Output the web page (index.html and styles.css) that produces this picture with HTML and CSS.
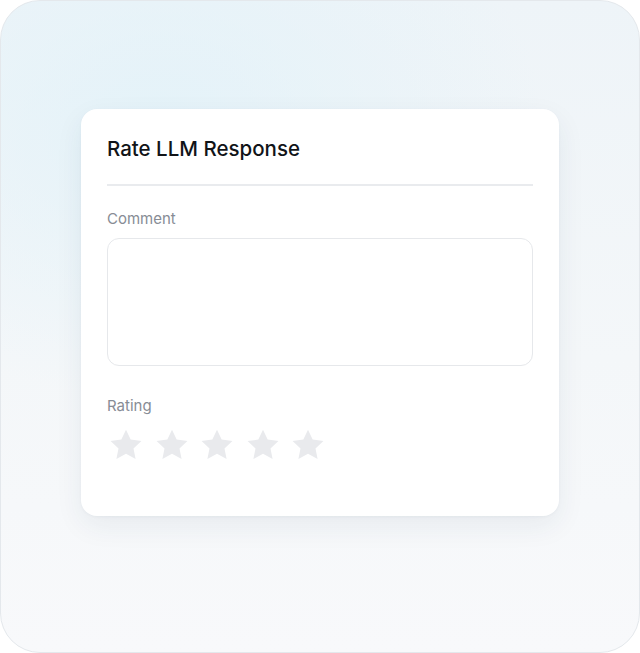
FILE: index.html
```html
<!DOCTYPE html>
<html>
<head>
<meta charset="utf-8">
<link rel="stylesheet" href="styles.css">
</head>
<body>
<div class="frame">
  <div class="card">
    <h1 class="title">Rate LLM Response</h1>
    <div class="divider"></div>
    <div class="label">Comment</div>
    <div class="textarea"></div>
    <div class="label rating-label">Rating</div>
    <div class="stars">
      <svg class="star" viewBox="0 0 24 24"><path d="M12 1.8l3.1 6.6 7.2.9-5.3 5 1.4 7.1L12 17.9l-6.4 3.5L7 14.3l-5.3-5 7.2-.9z"/></svg>
      <svg class="star" viewBox="0 0 24 24"><path d="M12 1.8l3.1 6.6 7.2.9-5.3 5 1.4 7.1L12 17.9l-6.4 3.5L7 14.3l-5.3-5 7.2-.9z"/></svg>
      <svg class="star" viewBox="0 0 24 24"><path d="M12 1.8l3.1 6.6 7.2.9-5.3 5 1.4 7.1L12 17.9l-6.4 3.5L7 14.3l-5.3-5 7.2-.9z"/></svg>
      <svg class="star" viewBox="0 0 24 24"><path d="M12 1.8l3.1 6.6 7.2.9-5.3 5 1.4 7.1L12 17.9l-6.4 3.5L7 14.3l-5.3-5 7.2-.9z"/></svg>
      <svg class="star" viewBox="0 0 24 24"><path d="M12 1.8l3.1 6.6 7.2.9-5.3 5 1.4 7.1L12 17.9l-6.4 3.5L7 14.3l-5.3-5 7.2-.9z"/></svg>
    </div>
  </div>
</div>
</body>
</html>
```
FILE: styles.css
```css
html, body {
  margin: 0;
  padding: 0;
  background: #ffffff;
}
body {
  font-family: Inter, "Noto Sans", sans-serif;
}
.frame {
  box-sizing: border-box;
  width: 640px;
  height: 653px;
  border: 1px solid #e4e8ec;
  border-radius: 40px;
  background:
    radial-gradient(ellipse 380px 280px at 25% 18%, rgba(226, 242, 249, 0.85), rgba(226, 242, 249, 0) 100%),
    linear-gradient(180deg, #eef4f8 0%, #f4f7f9 55%, #f8f9fb 100%);
  padding-top: 108px;
  padding-left: 80px;
  overflow: hidden;
}
.card {
  box-sizing: border-box;
  width: 478px;
  height: 407px;
  background: #ffffff;
  border-radius: 16px;
  box-shadow: 0 10px 28px rgba(30, 50, 80, 0.07), 0 1px 3px rgba(30, 50, 80, 0.04);
  padding: 26px 26px 0 26px;
}
.title {
  margin: 0;
  font-size: 20.5px;
  line-height: 28px;
  font-weight: 500;
  color: #111418;
}
.divider {
  height: 2px;
  background: #e9ebee;
  margin-top: 21px;
}
.label {
  font-size: 15px;
  line-height: 20px;
  color: #878c95;
  margin-top: 23px;
}
.textarea {
  box-sizing: border-box;
  height: 128px;
  margin-top: 9px;
  border: 1.5px solid #e6e8eb;
  border-radius: 12px;
  background: #fff;
}
.rating-label {
  margin-top: 30px;
}
.stars {
  display: flex;
  gap: 9.5px;
  margin-top: 11px;
  margin-left: 1px;
}
.star {
  width: 36px;
  height: 36px;
  fill: #e9eaed;
}
```
